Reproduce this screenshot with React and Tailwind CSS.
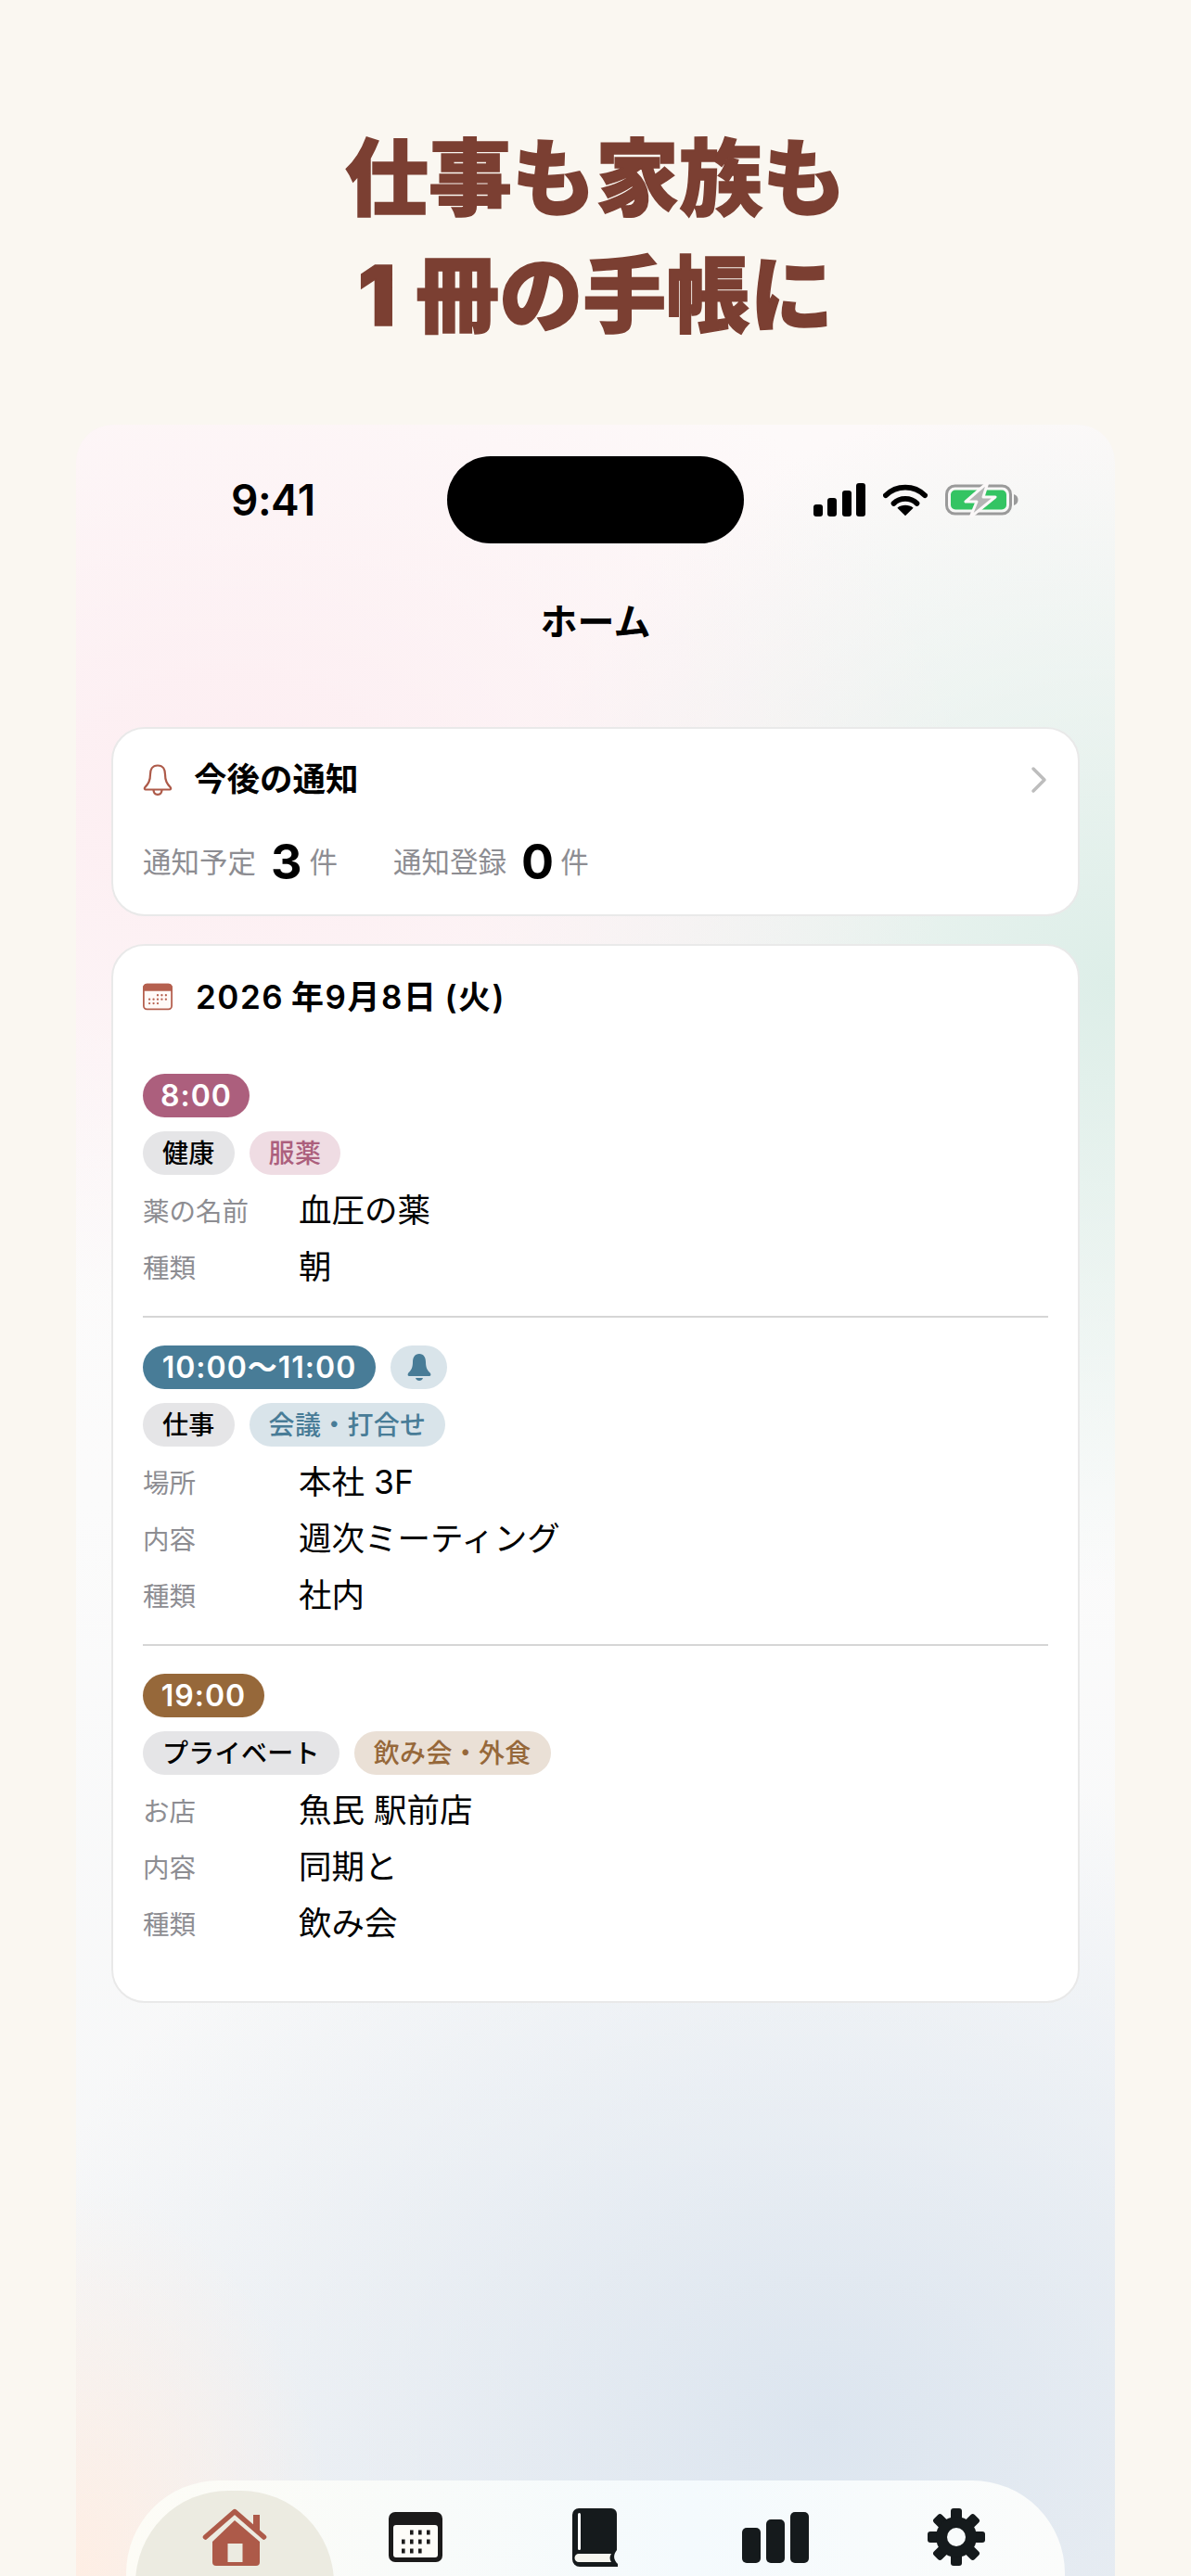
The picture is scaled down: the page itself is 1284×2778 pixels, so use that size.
const jp = "font-['Inter','Noto_Sans_CJK_JP',sans-serif]";

const events = [
  {
    time: '8:00',
    timeBg: 'bg-[#ac5f7d]',
    timeW: 'w-[115px]',
    category: '健康',
    tag: '服薬',
    tagClass: 'bg-[#efdce3] text-[#ac5f7d]',
    rows: [['薬の名前', '血圧の薬'], ['種類', '朝']],
  },
  {
    time: '10:00〜11:00',
    timeBg: 'bg-[#487c97]',
    timeW: 'w-[251px]',
    bell: true,
    category: '仕事',
    tag: '会議・打合せ',
    tagClass: 'bg-[#d9e4ea] text-[#487c97]',
    rows: [['場所', '本社 3F'], ['内容', '週次ミーティング'], ['種類', '社内']],
  },
  {
    time: '19:00',
    timeBg: 'bg-[#96683a]',
    timeW: 'w-[131px]',
    category: 'プライベート',
    tag: '飲み会・外食',
    tagClass: 'bg-[#eae0d6] text-[#96683a]',
    rows: [['お店', '魚民 駅前店'], ['内容', '同期と'], ['種類', '飲み会']],
  },
];

function StatusIcons() {
  return (
    <div className="flex items-center gap-[19px]">
      <svg width="56" height="36" viewBox="0 0 56 36">
        <rect x="0" y="23" width="10" height="13" rx="3" fill="#000" />
        <rect x="15" y="16" width="10" height="20" rx="3" fill="#000" />
        <rect x="31" y="8" width="10" height="28" rx="3" fill="#000" />
        <rect x="46" y="0" width="10" height="36" rx="3" fill="#000" />
      </svg>
      <svg width="48" height="36" viewBox="0 0 50 36">
        <path d="M3 13 C15 1 35 1 47 13" fill="none" stroke="#000" strokeWidth="6" strokeLinecap="round" />
        <path d="M12 22 C19 15 31 15 38 22" fill="none" stroke="#000" strokeWidth="6" strokeLinecap="round" />
        <path d="M16 27 C21 23 29 23 34 27 L25 36 Z" fill="#000" />
      </svg>
      <svg width="79" height="38" viewBox="0 0 79 38">
        <rect x="1.5" y="4" width="69" height="30" rx="9" fill="none" stroke="#9a9a9a" strokeWidth="3" />
        <rect x="6" y="8.5" width="60" height="21" rx="5" fill="#34c463" />
        <path d="M74 13 C77 14 78.5 16 78.5 19 C78.5 22 77 24 74 25 Z" fill="#9a9a9a" />
        <path d="M46 0 L22 21 H34 L27 38 L54 16 H41 Z" fill="#b5b5b5" stroke="#fbf8f8" strokeWidth="3" strokeLinejoin="round" />
      </svg>
    </div>
  );
}

function BellOutline() {
  return (
    <svg width="32" height="34" viewBox="0 0 32 34" fill="none" stroke="#ad5a49" strokeWidth="2.2" strokeLinejoin="round">
      <path d="M16 1.5 C10 1.5 8 6 8 11 C8 18 6 21 2 25.5 C1.5 26.5 2 27.5 3 27.5 H29 C30 27.5 30.5 26.5 30 25.5 C26 21 24 18 24 11 C24 6 22 1.5 16 1.5 Z" />
      <path d="M11.5 27.5 C11.5 31 13.5 32.8 16 32.8 C18.5 32.8 20.5 31 20.5 27.5" />
    </svg>
  );
}

const smallCalDots = [
  [18, 14], [23, 14], [28, 14],
  [8, 19], [13, 19], [18, 19], [23, 19], [28, 19],
  [8, 24], [13, 24], [18, 24],
];

function CalendarSmall() {
  return (
    <svg width="32" height="30" viewBox="0 0 36 32">
      <rect x="1" y="1" width="34" height="30" rx="4" fill="#fffaf8" stroke="#b5604f" strokeWidth="2" />
      <path d="M0 5 A5 5 0 0 1 5 0 H31 A5 5 0 0 1 36 5 V9 H0 Z" fill="#b5604f" />
      {smallCalDots.map(([x, y]) => (
        <circle key={`${x}-${y}`} cx={x} cy={y} r="1.3" fill="#b5604f" />
      ))}
    </svg>
  );
}

function HomeIcon() {
  return (
    <svg width="70" height="63" viewBox="0 0 70 63">
      <rect x="55" y="7" width="7" height="17" fill="#ad5a49" />
      <path d="M3.5 31 L35 3.5 L66.5 31" fill="none" stroke="#ad5a49" strokeWidth="5.5" strokeLinecap="round" strokeLinejoin="round" />
      <path d="M35 13 L62 36 V58 A4 4 0 0 1 58 62 H15 A4 4 0 0 1 11 58 V36 Z" fill="#ad5a49" />
      <rect x="27.5" y="38" width="16" height="20" fill="#ecebe1" />
    </svg>
  );
}

function TabIcons() {
  return (
    <>
      <div className="mx-[-10px] flex h-[200px] w-[214px] justify-center rounded-[100px] bg-[#ecebe1] pt-[19px]">
        <HomeIcon />
      </div>
      <svg width="58" height="54" viewBox="0 0 58 54" className="mt-[23px]">
        <rect width="58" height="54" rx="7" fill="#1b1a1a" />
        <rect x="5" y="14" width="48" height="35" rx="3" fill="#fdfcf8" />
        {[22, 32, 42].flatMap((y, r) =>
          [14, 23, 32, 41].filter((x, i) => !(r === 0 && i === 0) && !(r === 2 && i === 3)).map((x) => (
            <rect key={`${x}-${y}`} x={x} y={y - 2.5} width="3.6" height="5" fill="#1b1a1a" />
          ))
        )}
      </svg>
      <svg width="49" height="63" viewBox="0 0 49 63" className="mt-[19px]">
        <path d="M7 0 H42 A6 6 0 0 1 48 6 V45 C44 50 44 55 49 60 V63 H8 A8 8 0 0 1 0 55 V7 A7 7 0 0 1 7 0 Z" fill="#151a1c" />
        <rect x="6" y="5" width="3" height="40" rx="1.5" fill="#fff" />
        <path d="M7 49 H42 C40 52 40 55 42 58 H7 A4 4 0 0 1 7 49 Z" fill="#f6f6f0" />
      </svg>
      <svg width="73" height="55" viewBox="0 0 73 55" className="mt-[23px]">
        <rect x="0" y="17" width="20" height="38" rx="5" fill="#151a1c" />
        <rect x="26" y="8" width="20" height="47" rx="5" fill="#151a1c" />
        <rect x="52" y="0" width="20" height="55" rx="5" fill="#151a1c" />
      </svg>
      <svg width="62" height="62" viewBox="-31 -31 62 62" className="mt-[19px]">
        {[0, 45, 90, 135, 180, 225, 270, 315].map((a) => (
          <rect key={a} x="-6" y="-31" width="12" height="16" rx="3" fill="#151a1c" transform={`rotate(${a})`} />
        ))}
        <circle r="22" fill="#151a1c" />
        <circle r="10" fill="#f8fbfb" />
      </svg>
    </>
  );
}

export default function App() {
  return (
    <div className={`${jp} flex h-[2778px] w-[1284px] flex-col items-center overflow-hidden bg-[#faf7f1]`}>
      <h1 className="pt-[130px] text-center text-[90px] leading-[126px] font-black text-[#7b3f32] [-webkit-text-stroke:1.5px_#7b3f32]">
        仕事も家族も
        <br />
        <span className="mr-[22px]">1</span>冊の手帳に
      </h1>

      <div className="relative mt-[76px] flex h-[2320px] w-[1120px] flex-col overflow-hidden rounded-t-[40px] bg-[radial-gradient(ellipse_800px_560px_at_15%_17%,#fdedf1_0%,transparent_100%),radial-gradient(ellipse_700px_650px_at_100%_26%,#ddeee8_0%,transparent_100%),radial-gradient(ellipse_280px_420px_at_0%_100%,#feeee4_0%,transparent_100%),radial-gradient(ellipse_900px_720px_at_72%_93%,#dce5ef_0%,transparent_100%),linear-gradient(#fdf9f9,#fbfbfb_50%,#f4f5f6)]">
        <div className="flex h-[128px] shrink-0 items-end">
          <div className="relative flex h-[94px] w-full items-center justify-between pr-[104px] pl-[167px]">
            <span className="text-[46px] leading-none font-semibold tracking-[-0.5px] text-black">9:41</span>
            <div className="absolute top-0 left-[400px] h-[94px] w-[320px] rounded-[47px] bg-black" />
            <StatusIcons />
          </div>
        </div>

        <div className="mt-[57px] text-center text-[40px] leading-[56px] font-bold text-black">ホーム</div>

        <div className="mt-[85px] flex flex-col gap-[30px] px-[38px]">
          <section className="flex h-[204px] flex-col rounded-[36px] border-2 border-[#e9e9e9] bg-white px-[32px]">
            <div className="mt-[34px] flex items-center">
              <BellOutline />
              <span className="ml-[23px] text-[35.5px] leading-[42px] font-bold text-black">今後の通知</span>
              <svg width="20" height="30" viewBox="0 0 20 30" className="ml-auto" fill="none" stroke="#bdbdbd" strokeWidth="3.5" strokeLinecap="round" strokeLinejoin="round">
                <path d="M4 3 L16 15 L4 27" />
              </svg>
            </div>
            <div className="mt-[40px] flex items-center text-[30.5px] leading-[56px] text-[#8d8d92]">
              <span>通知予定</span>
              <span className="ml-[16px] text-[52px] font-bold text-black">3</span>
              <span className="ml-[8px]">件</span>
              <span className="ml-[60px]">通知登録</span>
              <span className="ml-[16px] text-[52px] font-bold text-black">0</span>
              <span className="ml-[7px]">件</span>
            </div>
          </section>

          <section className="h-[1142px] rounded-[36px] border-2 border-[#e9e9e9] bg-white px-[32px]">
            <div className="mt-[34px] flex items-center">
              <CalendarSmall />
              <span className="ml-[25px] text-[35px] leading-[42px] font-semibold tracking-[1.5px] whitespace-nowrap text-black">
                2026<span className="ml-[8px]">年</span>9月8日<span className="ml-[8px]">(火)</span>
              </span>
            </div>

            <div className="mt-[62px] flex flex-col">
              {events.map((ev, i) => (
                <div key={ev.time} className={i > 0 ? 'mt-[22px] border-t-2 border-[#d6d6d6] pt-[30px]' : ''}>
                  <div className="flex gap-[16px]">
                    <span className={`flex h-[47px] ${ev.timeW} items-center justify-center rounded-full text-[32px] font-semibold tracking-[1px] whitespace-nowrap text-white ${ev.timeBg}`}>
                      {ev.time}
                    </span>
                    {ev.bell && (
                      <span className="flex h-[47px] w-[61px] items-center justify-center rounded-full bg-[#d9e4ea]">
                        <svg width="26" height="30" viewBox="0 0 26 30" fill="#487c97">
                          <path d="M13 0 C8 0 6 4 6 9 C6 15 4 18 1 21 C0 23 1 24 2 24 H24 C25 24 26 23 25 21 C22 18 20 15 20 9 C20 4 18 0 13 0 Z" />
                          <path d="M9 26 H17 C16 30 10 30 9 26 Z" />
                        </svg>
                      </span>
                    )}
                  </div>
                  <div className="mt-[15px] flex gap-[16px] text-[28px] leading-none tracking-[0.3px]">
                    <span className="flex h-[47px] items-center rounded-full bg-[#e5e5e7] px-[21px] font-medium text-black">{ev.category}</span>
                    <span className={`flex h-[47px] items-center rounded-full px-[21px] font-medium ${ev.tagClass}`}>{ev.tag}</span>
                  </div>
                  <div className="mt-[8px]">
                    {ev.rows.map(([label, value]) => (
                      <div key={label} className="flex h-[61px] items-center">
                        <span className="w-[168px] shrink-0 pt-[3px] text-[28.5px] text-[#8d8d92]">{label}</span>
                        <span className="text-[35.5px] text-black">{value}</span>
                      </div>
                    ))}
                  </div>
                </div>
              ))}
            </div>
          </section>
        </div>

        <nav className="absolute bottom-[-120px] left-[54px] grid h-[223px] w-[1012px] grid-cols-5 justify-items-center rounded-[100px] bg-[linear-gradient(90deg,#fdfcf6,#f4fafd_60%,#fbfcfb)] px-[20px] pt-[11px]">
          <TabIcons />
        </nav>
      </div>
    </div>
  );
}
